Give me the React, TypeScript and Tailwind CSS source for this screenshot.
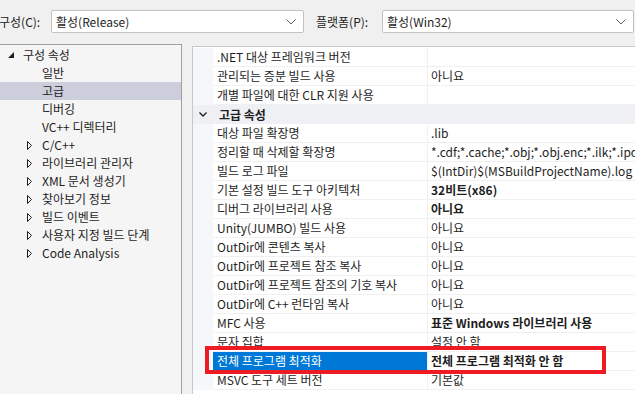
import React from 'react';

const FONT = { fontFamily: '"Noto Sans CJK KR", "Noto Sans", sans-serif' };

type TreeItem = { label: string; root?: boolean; expandable?: boolean; selected?: boolean };

const tree: TreeItem[] = [
  { label: '구성 속성', root: true },
  { label: '일반' },
  { label: '고급', selected: true },
  { label: '디버깅' },
  { label: 'VC++ 디렉터리' },
  { label: 'C/C++', expandable: true },
  { label: '라이브러리 관리자', expandable: true },
  { label: 'XML 문서 생성기', expandable: true },
  { label: '찾아보기 정보', expandable: true },
  { label: '빌드 이벤트', expandable: true },
  { label: '사용자 지정 빌드 단계', expandable: true },
  { label: 'Code Analysis', expandable: true },
];

type Prop = { name: string; value?: string; bold?: boolean; category?: boolean; selected?: boolean };

const props: Prop[] = [
  { name: '.NET 대상 프레임워크 버전' },
  { name: '관리되는 증분 빌드 사용', value: '아니요' },
  { name: '개별 파일에 대한 CLR 지원 사용' },
  { name: '고급 속성', category: true },
  { name: '대상 파일 확장명', value: '.lib' },
  { name: '정리할 때 삭제할 확장명', value: '*.cdf;*.cache;*.obj;*.obj.enc;*.ilk;*.ipdb;*.iobj' },
  { name: '빌드 로그 파일', value: '$(IntDir)$(MSBuildProjectName).log' },
  { name: '기본 설정 빌드 도구 아키텍처', value: '32비트(x86)', bold: true },
  { name: '디버그 라이브러리 사용', value: '아니요', bold: true },
  { name: 'Unity(JUMBO) 빌드 사용', value: '아니요' },
  { name: 'OutDir에 콘텐츠 복사', value: '아니요' },
  { name: 'OutDir에 프로젝트 참조 복사', value: '아니요' },
  { name: 'OutDir에 프로젝트 참조의 기호 복사', value: '아니요' },
  { name: 'OutDir에 C++ 런타임 복사', value: '아니요' },
  { name: 'MFC 사용', value: '표준 Windows 라이브러리 사용', bold: true },
  { name: '문자 집합', value: '설정 안 함' },
  { name: '전체 프로그램 최적화', value: '전체 프로그램 최적화 안 함', bold: true, selected: true },
  { name: 'MSVC 도구 세트 버전', value: '기본값' },
];

function ComboBox({ text, width }: { text: string; width: string }) {
  return (
    <div
      className={`flex h-[23px] items-center justify-between rounded-[2px] border border-[#c3c3c3] bg-white pl-[4px] pr-[7px] ${width}`}
    >
      <span className="text-[12px] text-[#1e1e1e]">{text}</span>
      <svg width="10" height="6" viewBox="0 0 10 6">
        <polyline points="0.5,0.5 5,5 9.5,0.5" fill="none" stroke="#606060" strokeWidth="1" />
      </svg>
    </div>
  );
}

function TreeRow({ item }: { item: TreeItem }) {
  return (
    <div
      className={`flex h-[18px] items-center text-[12px] text-[#1e1e1e] ${item.selected ? 'bg-[#cccedb]' : ''}`}
    >
      {item.root ? (
        <>
          <svg className="ml-[8px] mr-[9px]" width="6" height="6" viewBox="0 0 6 6">
            <polygon points="6,0 6,6 0,6" fill="#1e1e1e" />
          </svg>
          <span>{item.label}</span>
        </>
      ) : (
        <>
          <div className="ml-[27px] mr-[10px] flex w-[5px] items-center">
            {item.expandable && (
              <svg width="5" height="9" viewBox="0 0 5 9">
                <polygon points="0.5,0.5 4.5,4.5 0.5,8.5" fill="none" stroke="#1e1e1e" strokeWidth="1" />
              </svg>
            )}
          </div>
          <span>{item.label}</span>
        </>
      )}
    </div>
  );
}

function PropRow({ p }: { p: Prop }) {
  if (p.category) {
    return (
      <div className="flex h-[19px] items-center bg-[#eef0f4] text-[12px] font-bold text-[#1e1e1e]">
        <svg className="ml-[6px] mr-[12px]" width="8" height="5" viewBox="0 0 8 5">
          <polyline points="0.5,0.5 4,4 7.5,0.5" fill="none" stroke="#1e1e1e" strokeWidth="1.3" />
        </svg>
        <span>{p.name}</span>
      </div>
    );
  }
  return (
    <div className="flex h-[19px] text-[12px]">
      <div className="w-[20px] shrink-0 bg-[#f5f7fa]" />
      <div
        className={`flex w-[215px] shrink-0 items-center border-b border-r border-[#f0f0f0] pl-[4px] ${
          p.selected ? 'border-b-[#0078d7] bg-[#0078d7] text-white' : 'text-[#1e1e1e]'
        }`}
      >
        <span className="whitespace-nowrap">{p.name}</span>
      </div>
      <div className="flex min-w-0 flex-1 items-center overflow-hidden border-b border-[#f0f0f0] pl-[3px] text-[#1e1e1e]">
        <span className={`whitespace-nowrap ${p.bold ? 'font-bold' : ''}`}>{p.value ?? ''}</span>
      </div>
    </div>
  );
}

export default function App() {
  return (
    <div className="relative flex h-[394px] w-[635px] flex-col overflow-hidden bg-[#f0f0f0]" style={FONT}>
      <div className="flex h-[44px] items-start pt-[10px]">
        <span className="ml-[-1px] mt-[3px] w-[52px] text-[12px] text-[#1e1e1e]">구성(C):</span>
        <ComboBox text="활성(Release)" width="w-[253px]" />
        <span className="ml-[12px] mt-[3px] w-[66px] text-[12px] text-[#1e1e1e]">플랫폼(P):</span>
        <ComboBox text="활성(Win32)" width="w-[252px]" />
      </div>
      <div className="flex min-h-0 flex-1">
        <div className="w-[182px] shrink-0 border-r border-t border-[#a0a0a0] bg-[#f5f5f5] pt-[1px]">
          {tree.map((t) => (
            <TreeRow key={t.label} item={t} />
          ))}
        </div>
        <div className="ml-[10px] mt-[2px] min-w-0 flex-1 border-l border-t border-[#c8c8c8] bg-white pt-[1px]">
          {props.map((p) => (
            <PropRow key={p.name} p={p} />
          ))}
        </div>
      </div>
      <div className="absolute left-[205px] top-[346px] h-[28px] w-[401px] border-[4px] border-[#ed1c24]" />
    </div>
  );
}
